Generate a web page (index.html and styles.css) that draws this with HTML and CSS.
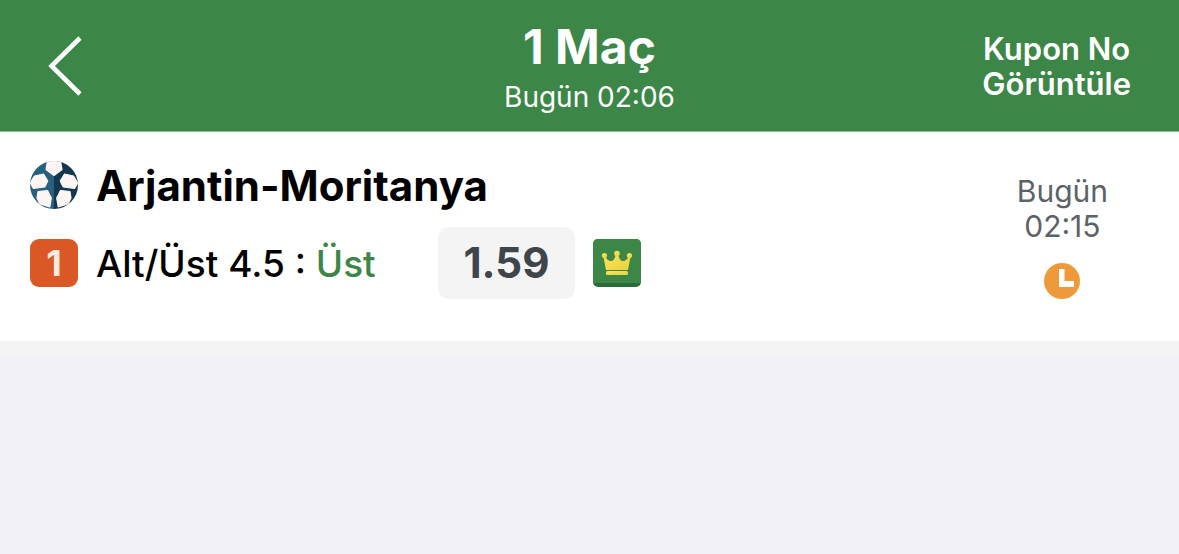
FILE: index.html
```html
<!DOCTYPE html>
<html lang="tr">
<head>
<meta charset="utf-8">
<meta name="viewport" content="width=device-width, initial-scale=1">
<title>1 Maç</title>
<link rel="stylesheet" href="styles.css">
</head>
<body>
<header class="topbar">
  <button class="back" type="button" aria-label="Geri">
    <svg width="36" height="60" viewBox="0 0 36 60" fill="none" stroke="#fff" stroke-width="4.600"><path d="M32 2 3.500 30 32 58"/></svg>
  </button>
  <div class="heading">
    <h1 class="title">1 Maç</h1>
    <p class="subtitle">Bugün 02:06</p>
  </div>
  <button class="coupon" type="button">Kupon No<br>Görüntüle</button>
</header>
<main>
  <article class="match">
    <div class="details">
      <div class="teams">
        <svg class="icon" viewBox="0 0 48 48" aria-hidden="true">
          <defs><clipPath id="ball"><circle cx="24" cy="24" r="24"/></clipPath></defs>
          <g clip-path="url(#ball)">
            <path fill="#28617f" d="M0 0h24v48H0z"/>
            <path fill="#12384f" d="M24 0h24v48H24z"/>
            <g fill="#fff5f3" stroke="#fff5f3" stroke-width="1.200" stroke-linejoin="round">
              <path d="M17.500 0h13l1.500 8.500-8 6-8-6z"/>
              <path d="M4.500 15 13.500 13l4.300 7-3 6L3.500 27.500 0 22z"/>
              <path d="M43.500 15 34.500 13l-4.300 7 3 6 11.300 1.500L48 22z"/>
              <path d="M8 30.500 17.500 29.500l3.800 7.500-1.500 9-9.800-3-3-6z"/>
              <path d="M40 30.500 30.500 29.500 26.700 37l1.500 9 9.800-3 3-6z"/>
            </g>
          </g>
        </svg>
        <h2 class="name">Arjantin-Moritanya</h2>
      </div>
      <div class="bet">
        <span class="mbs">1</span>
        <span class="market">Alt/Üst 4.5 : <span class="pick">Üst</span></span>
        <span class="odds">1.59</span>
        <svg class="icon" viewBox="0 0 48 48" role="img" aria-label="Kral oran">
          <defs>
            <linearGradient id="gold" x1="0" y1="0" x2="1" y2="1"><stop offset="0" stop-color="#fbe75b"/><stop offset="1" stop-color="#e8d03c"/></linearGradient>
          </defs>
          <rect width="48" height="48" rx="5" fill="#2a6c38"/>
          <path fill="#3c8748" d="M5 0h38a5 5 0 0 1 5 5v39H0V5a5 5 0 0 1 5-5z"/>
          <g fill="url(#gold)">
            <path d="M13 31 10.500 18l1.500-1c2.500 6 7.500 6.500 9.500 2.500.9-1.800 1.200-3.500 1.300-5.500h2.400c.1 2 .4 3.700 1.300 5.500 2 4 7 3.500 9.500-2.500l1.500 1L35 31z"/>
            <circle cx="11.500" cy="16.500" r="2.600"/>
            <circle cx="24" cy="14.500" r="2.800"/>
            <circle cx="36.500" cy="16.500" r="2.600"/>
            <rect x="13" y="32" width="22" height="4" rx="1.500"/>
          </g>
        </svg>
      </div>
    </div>
    <div class="when">
      <time class="time">Bugün<br>02:15</time>
      <svg class="clock" viewBox="0 0 36 36" role="img" aria-label="Bekliyor"><circle cx="18" cy="18" r="18" fill="#ee9a3a"/><path fill="#fff" d="M15 6h5.500v12H30v6H15z"/></svg>
    </div>
  </article>
</main>
</body>
</html>
```
FILE: styles.css
```css
* { box-sizing: border-box; }

body {
  margin: 0;
  min-height: 100vh;
  background: #f2f1f8;
  font-family: Inter, "Liberation Sans", sans-serif;
  color: #000;
}

h1, h2, p { margin: 0; }

button {
  padding: 0;
  border: 0;
  background: none;
  color: inherit;
  font: inherit;
}

.topbar {
  display: grid;
  grid-template-columns: 1fr auto 1fr;
  align-items: center;
  padding: 18px 48px 13px;
  border-bottom: 1px solid #8ebc96;
  background: #3c8748;
  color: #fff;
}

.back { justify-self: start; padding-bottom: 4px; }
.back svg { display: block; }
.heading { text-align: center; }
.title { font-size: 48px; font-weight: 700; line-height: 58px; }
.subtitle { font-size: 28px; line-height: 42px; }

.coupon {
  justify-self: end;
  padding-bottom: 4px;
  font-size: 31px;
  font-weight: 600;
  line-height: 35px;
}

.match {
  display: flex;
  justify-content: space-between;
  padding: 27px 71px 42px 30px;
  border-bottom: 14px solid #f4f4f4;
  background: #fff;
}

.icon { flex: none; width: 48px; height: 48px; }
.teams { display: flex; align-items: center; gap: 18px; height: 52px; }
.name { font-size: 42px; font-weight: 700; line-height: 52px; padding-top: 2px; }
.bet { display: flex; align-items: center; margin-top: 16px; }

.mbs {
  width: 48px;
  margin-right: 18px;
  border-radius: 9px;
  background: #d95826;
  color: #ffeae0;
  font-size: 36px;
  font-weight: 700;
  line-height: 48px;
  text-align: center;
}

.market { min-width: 342px; font-size: 37px; font-weight: 500; }
.pick { color: #3c8748; }

.odds {
  min-width: 137px;
  margin-right: 18px;
  border-radius: 10px;
  background: #f4f4f4;
  color: #3e464c;
  font-size: 42px;
  font-weight: 700;
  line-height: 72px;
  text-align: center;
}

.when {
  display: flex;
  flex-direction: column;
  align-items: center;
  gap: 19px;
  padding-top: 15px;
}

.time {
  color: #5b6268;
  font-size: 30px;
  line-height: 35px;
  text-align: center;
}

.clock { width: 36px; height: 36px; }
```
